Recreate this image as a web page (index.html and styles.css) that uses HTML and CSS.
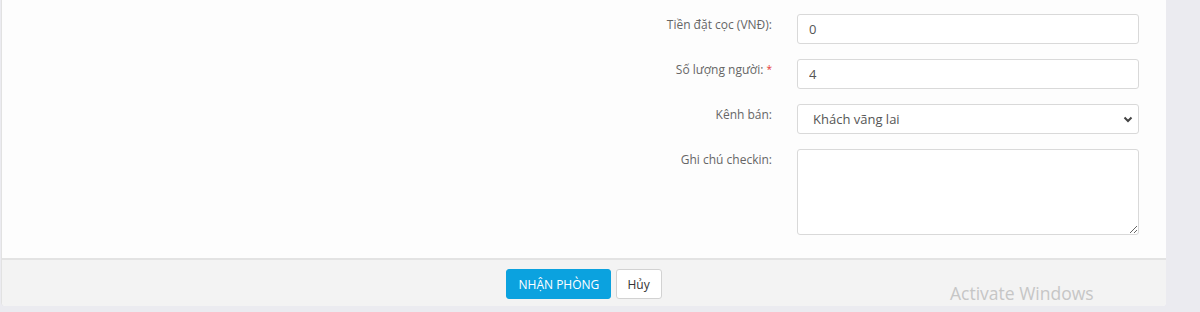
FILE: index.html
```html
<!DOCTYPE html>
<html lang="vi">
<head>
<meta charset="UTF-8" />
<meta name="viewport" content="width=device-width, initial-scale=1.0">
<title>Nhận phòng</title>
<link rel="stylesheet" href="styles.css">
</head>
<body>
<div class="modal">
<div class="modal-body">
<div class="form-row">
<label class="control-label">Tiền đặt cọc (VNĐ):</label>
<input class="form-control" type="text" value="0">
</div>
<div class="form-row">
<label class="control-label">Số lượng người: <span class="required">*</span></label>
<input class="form-control" type="text" value="4">
</div>
<div class="form-row">
<label class="control-label">Kênh bán:</label>
<div class="select-wrap">
<select class="form-control">
<option>Khách vãng lai</option>
</select>
<svg class="caret" width="10" height="7" viewBox="0 0 10 7"><path d="M1.5 1.5 L5 5 L8.5 1.5" fill="none" stroke="#444" stroke-width="2"/></svg>
</div>
</div>
<div class="form-row">
<label class="control-label">Ghi chú checkin:</label>
<textarea class="form-control notes"></textarea>
</div>
</div>
<div class="modal-footer">
<button class="btn btn-primary">Nhận phòng</button>
<button class="btn btn-default">Hủy</button>
</div>
</div>
<div class="watermark">Activate Windows</div>
</body>
</html>
```

FILE: styles.css
```css
body {
  margin: 0;
  font-family: 'Open Sans', 'Noto Sans', sans-serif;
  background-color: #ebebf0;
  color: #555;
  height: 312px;
  overflow: hidden;
}
.modal {
  width: 1165px;
  margin-left: 1px;
  background-color: #fdfdfd;
  border-left: 1px solid #e2e2e2;
  border-radius: 0 0 4px 4px;
  box-sizing: border-box;
}
.modal-body {
  padding: 14px 0 8px;
}
.form-row {
  display: grid;
  grid-template-columns: 770px 342px;
  column-gap: 25px;
  margin-bottom: 15px;
}
.control-label {
  font-size: 12px;
  line-height: 17px;
  padding-top: 2px;
  text-align: right;
  color: #666;
}
.required {
  color: #e53935;
  font-size: 10px;
  vertical-align: 1px;
}
.form-control {
  box-sizing: border-box;
  width: 342px;
  height: 30px;
  padding: 0 11px;
  font-family: 'Open Sans', 'Noto Sans', sans-serif;
  font-size: 13px;
  color: #555;
  background-color: #fff;
  border: 1px solid #d9d9d9;
  border-radius: 3px;
  outline: none;
}
.select-wrap {
  position: relative;
}
.select-wrap select {
  appearance: none;
  -webkit-appearance: none;
  padding-left: 15px;
}
.caret {
  position: absolute;
  right: 6px;
  top: 12px;
}
.notes {
  height: 86px;
  resize: vertical;
  padding: 6px 11px;
}
.modal-footer {
  background-color: #f3f3f3;
  border-top: 2px solid #e3e3e3;
  height: 48px;
  padding-top: 9px;
  box-sizing: border-box;
  text-align: center;
  border-radius: 0 0 4px 4px;
}
.btn {
  font-family: 'Open Sans', 'Noto Sans', sans-serif;
  font-size: 12px;
  height: 30px;
  border-radius: 3px;
  vertical-align: top;
  cursor: pointer;
}
.btn-primary {
  background-color: #0ba2df;
  border: 1px solid #0ba2df;
  color: #fff;
  text-transform: uppercase;
  width: 105px;
  padding: 0;
}
.btn-default {
  background-color: #fff;
  border: 1px solid #d2d2d2;
  color: #333;
  width: 46px;
  padding: 0;
}
.watermark {
  position: absolute;
  left: 950px;
  top: 281px;
  font-family: 'Open Sans', 'Noto Sans', sans-serif;
  font-size: 17.5px;
  color: #c6c6c6;
}
```
